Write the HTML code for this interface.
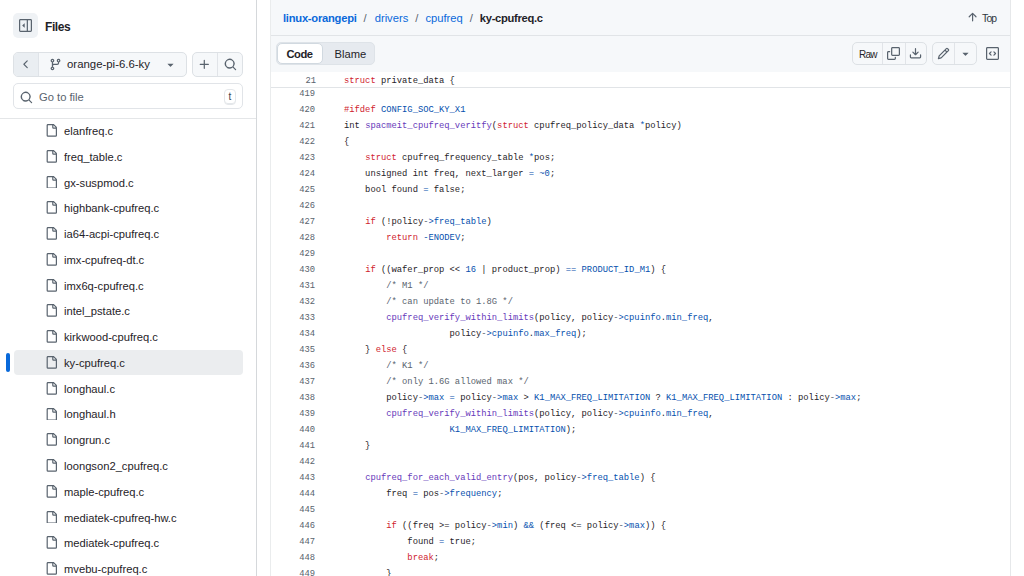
<!DOCTYPE html>
<html><head><meta charset="utf-8">
<style>
*{box-sizing:border-box;margin:0;padding:0}
html,body{width:1024px;height:576px;overflow:hidden;background:#fff;font-family:"Liberation Sans",sans-serif;color:#1f2328}
.a{position:absolute}
svg{display:block}
#side{position:absolute;left:0;top:0;width:257px;height:576px;border-right:1px solid #d5d8db;background:#fff}
.btn{position:absolute;border:1px solid #dde1e5;border-radius:5px;background:#f6f8fa}
.row{position:absolute;left:0;width:256px;height:26px}
.row .ic{position:absolute;left:45px;top:6.6px}
.row .t{position:absolute;left:64px;top:0.5px;line-height:26px;font-size:11.2px;white-space:nowrap;color:#1f2328}
.sel{position:absolute;left:14px;width:229px;border-radius:4px;background:#ebedef}
#main{position:absolute;left:257px;top:0;width:767px;height:576px;background:#fff}
#box{position:absolute;left:270px;top:-6px;width:741px;height:600px;border:1px solid #d1d9e0;border-radius:6px;background:#fff}
.hdr{position:absolute;left:271px;top:0;width:739px;height:36px;background:#f6f8fa;border-bottom:1px solid #e1e4e7}
.tb{position:absolute;left:271px;top:36px;width:739px;height:36px;background:#f6f8fa}
.code{font-family:"Liberation Mono",monospace;font-size:8.8px;white-space:pre}
.ln{position:absolute;left:271px;width:44px;text-align:right;height:16px;line-height:16px;color:#59636e}
.cl{position:absolute;left:344px;height:16px;line-height:16px;color:#1f2328}
.k{color:#cf222e}.f{color:#6639ba}.b{color:#0550ae}.c{color:#59636e}
</style></head><body>
<div id="side">
  <!-- toggle -->
  <div class="a" style="left:13px;top:13px;width:25px;height:25px;border-radius:5px;background:#eff2f5"></div>
  <svg class="a" style="left:19px;top:19px" width="13" height="13" viewBox="0 0 16 16"><path fill="#59636e" d="m4.177 7.823 2.396-2.396A.25.25 0 0 1 7 5.604v4.792a.25.25 0 0 1-.427.177L4.177 8.177a.25.25 0 0 1 0-.354Z"/><path fill="#59636e" d="M0 1.75C0 .784.784 0 1.75 0h12.5C15.216 0 16 .784 16 1.75v12.5A1.75 1.75 0 0 1 14.25 16H1.75A1.75 1.75 0 0 1 0 14.25Zm1.75-.25a.25.25 0 0 0-.25.25v12.5c0 .138.112.25.25.25H9.5v-13Zm12.5 13a.25.25 0 0 0 .25-.25V1.75a.25.25 0 0 0-.25-.25H11v13Z"/></svg>
  <div class="a" style="left:45px;top:17.8px;line-height:18px;font-size:12px;font-weight:bold;letter-spacing:-0.4px">Files</div>

  <!-- branch group -->
  <div class="btn" style="left:13px;top:52px;width:174px;height:25px"></div>
  <div class="a" style="left:14px;top:53px;width:25px;height:23px;background:#eaeef2;border-radius:4px 0 0 4px;border-right:1px solid #dfe3e8"></div>
  <svg class="a" style="left:19.8px;top:58px" width="12.5" height="12.5" viewBox="0 0 16 16"><path fill="#59636e" d="M9.78 12.78a.75.75 0 0 1-1.06 0L4.47 8.53a.75.75 0 0 1 0-1.06l4.25-4.25a.751.751 0 0 1 1.042.018.751.751 0 0 1 .018 1.042L6.06 8l3.72 3.72a.75.75 0 0 1 0 1.06Z"/></svg>
  <svg class="a" style="left:49px;top:58px" width="13" height="13" viewBox="0 0 16 16"><path fill="#59636e" d="M9.5 3.25a2.25 2.25 0 1 1 3 2.122V6A2.5 2.5 0 0 1 10 8.5H6a1 1 0 0 0-1 1v1.128a2.251 2.251 0 1 1-1.5 0V5.372a2.25 2.25 0 1 1 1.5 0v1.836A2.493 2.493 0 0 1 6 7h4a1 1 0 0 0 1-1v-.628A2.25 2.25 0 0 1 9.5 3.25Zm-6 0a.75.75 0 1 0 1.5 0 .75.75 0 0 0-1.5 0Zm8.25-.75a.75.75 0 1 0 0 1.5.75.75 0 0 0 0-1.5ZM4.25 12a.75.75 0 1 0 0 1.5.75.75 0 0 0 0-1.5Z"/></svg>
  <div class="a" style="left:67px;top:55px;line-height:18px;font-size:11.4px">orange-pi-6.6-ky</div>
  <svg class="a" style="left:164px;top:58px" width="13" height="13" viewBox="0 0 16 16"><path fill="#59636e" d="m4.427 7.427 3.396 3.396a.25.25 0 0 0 .354 0l3.396-3.396A.25.25 0 0 0 11.396 7H4.604a.25.25 0 0 0-.177.427Z"/></svg>

  <div class="btn" style="left:192px;top:52px;width:51px;height:25px"></div>
  <div class="a" style="left:217px;top:53px;width:1px;height:23px;background:#e1e4e8"></div>
  <svg class="a" style="left:198px;top:58px" width="13" height="13" viewBox="0 0 16 16"><path fill="#59636e" d="M7.75 2a.75.75 0 0 1 .75.75V7h4.25a.75.75 0 0 1 0 1.5H8.5v4.25a.75.75 0 0 1-1.5 0V8.5H2.75a.75.75 0 0 1 0-1.5H7V2.75A.75.75 0 0 1 7.75 2Z"/></svg>
  <svg class="a" style="left:224px;top:58px" width="13" height="13" viewBox="0 0 16 16"><path fill="#59636e" d="M10.68 11.74a6 6 0 0 1-7.922-8.982 6 6 0 0 1 8.982 7.922l3.04 3.04a.749.749 0 0 1-.326 1.275.749.749 0 0 1-.734-.215ZM11.5 7a4.499 4.499 0 1 0-8.997 0A4.499 4.499 0 0 0 11.5 7Z"/></svg>

  <!-- go to file -->
  <div class="a" style="left:13px;top:83px;width:230px;height:25.5px;border:1px solid #e1e4e8;border-radius:5px;background:#fff"></div>
  <svg class="a" style="left:19.5px;top:90.5px" width="13" height="13" viewBox="0 0 16 16"><path fill="#59636e" d="M10.68 11.74a6 6 0 0 1-7.922-8.982 6 6 0 0 1 8.982 7.922l3.04 3.04a.749.749 0 0 1-.326 1.275.749.749 0 0 1-.734-.215ZM11.5 7a4.499 4.499 0 1 0-8.997 0A4.499 4.499 0 0 0 11.5 7Z"/></svg>
  <div class="a" style="left:39px;top:87.5px;line-height:18px;font-size:11.2px;color:#59636e">Go to file</div>
  <div class="a" style="left:224px;top:89px;width:12px;height:15.5px;border:1px solid #e4e7ea;border-radius:4px;box-shadow:inset 0 -1px 0 #e4e7ea;font-size:10px;line-height:14px;text-align:center;color:#3d444d">t</div>

  <div class="a" style="left:0;top:118px;width:256px;height:1px;background:#e4e6e8"></div>

  <div class="row" style="top:117.50px"><svg class="ic" width="12.8" height="12.8" viewBox="0 0 16 16"><path fill="#59636e" d="M2 1.75C2 .784 2.784 0 3.75 0h6.586c.464 0 .909.184 1.237.513l2.914 2.914c.329.328.513.773.513 1.237v9.586A1.75 1.75 0 0 1 13.25 16h-9.5A1.75 1.75 0 0 1 2 14.25Zm1.75-.25a.25.25 0 0 0-.25.25v12.5c0 .138.112.25.25.25h9.5a.25.25 0 0 0 .25-.25V6h-2.75A1.75 1.75 0 0 1 9 4.25V1.5Zm6.75.062V4.25c0 .138.112.25.25.25h2.688l-.011-.013-2.914-2.914-.013-.011Z"/></svg><div class="t">elanfreq.c</div></div>
<div class="row" style="top:143.27px"><svg class="ic" width="12.8" height="12.8" viewBox="0 0 16 16"><path fill="#59636e" d="M2 1.75C2 .784 2.784 0 3.75 0h6.586c.464 0 .909.184 1.237.513l2.914 2.914c.329.328.513.773.513 1.237v9.586A1.75 1.75 0 0 1 13.25 16h-9.5A1.75 1.75 0 0 1 2 14.25Zm1.75-.25a.25.25 0 0 0-.25.25v12.5c0 .138.112.25.25.25h9.5a.25.25 0 0 0 .25-.25V6h-2.75A1.75 1.75 0 0 1 9 4.25V1.5Zm6.75.062V4.25c0 .138.112.25.25.25h2.688l-.011-.013-2.914-2.914-.013-.011Z"/></svg><div class="t">freq_table.c</div></div>
<div class="row" style="top:169.04px"><svg class="ic" width="12.8" height="12.8" viewBox="0 0 16 16"><path fill="#59636e" d="M2 1.75C2 .784 2.784 0 3.75 0h6.586c.464 0 .909.184 1.237.513l2.914 2.914c.329.328.513.773.513 1.237v9.586A1.75 1.75 0 0 1 13.25 16h-9.5A1.75 1.75 0 0 1 2 14.25Zm1.75-.25a.25.25 0 0 0-.25.25v12.5c0 .138.112.25.25.25h9.5a.25.25 0 0 0 .25-.25V6h-2.75A1.75 1.75 0 0 1 9 4.25V1.5Zm6.75.062V4.25c0 .138.112.25.25.25h2.688l-.011-.013-2.914-2.914-.013-.011Z"/></svg><div class="t">gx-suspmod.c</div></div>
<div class="row" style="top:194.81px"><svg class="ic" width="12.8" height="12.8" viewBox="0 0 16 16"><path fill="#59636e" d="M2 1.75C2 .784 2.784 0 3.75 0h6.586c.464 0 .909.184 1.237.513l2.914 2.914c.329.328.513.773.513 1.237v9.586A1.75 1.75 0 0 1 13.25 16h-9.5A1.75 1.75 0 0 1 2 14.25Zm1.75-.25a.25.25 0 0 0-.25.25v12.5c0 .138.112.25.25.25h9.5a.25.25 0 0 0 .25-.25V6h-2.75A1.75 1.75 0 0 1 9 4.25V1.5Zm6.75.062V4.25c0 .138.112.25.25.25h2.688l-.011-.013-2.914-2.914-.013-.011Z"/></svg><div class="t">highbank-cpufreq.c</div></div>
<div class="row" style="top:220.58px"><svg class="ic" width="12.8" height="12.8" viewBox="0 0 16 16"><path fill="#59636e" d="M2 1.75C2 .784 2.784 0 3.75 0h6.586c.464 0 .909.184 1.237.513l2.914 2.914c.329.328.513.773.513 1.237v9.586A1.75 1.75 0 0 1 13.25 16h-9.5A1.75 1.75 0 0 1 2 14.25Zm1.75-.25a.25.25 0 0 0-.25.25v12.5c0 .138.112.25.25.25h9.5a.25.25 0 0 0 .25-.25V6h-2.75A1.75 1.75 0 0 1 9 4.25V1.5Zm6.75.062V4.25c0 .138.112.25.25.25h2.688l-.011-.013-2.914-2.914-.013-.011Z"/></svg><div class="t">ia64-acpi-cpufreq.c</div></div>
<div class="row" style="top:246.35px"><svg class="ic" width="12.8" height="12.8" viewBox="0 0 16 16"><path fill="#59636e" d="M2 1.75C2 .784 2.784 0 3.75 0h6.586c.464 0 .909.184 1.237.513l2.914 2.914c.329.328.513.773.513 1.237v9.586A1.75 1.75 0 0 1 13.25 16h-9.5A1.75 1.75 0 0 1 2 14.25Zm1.75-.25a.25.25 0 0 0-.25.25v12.5c0 .138.112.25.25.25h9.5a.25.25 0 0 0 .25-.25V6h-2.75A1.75 1.75 0 0 1 9 4.25V1.5Zm6.75.062V4.25c0 .138.112.25.25.25h2.688l-.011-.013-2.914-2.914-.013-.011Z"/></svg><div class="t">imx-cpufreq-dt.c</div></div>
<div class="row" style="top:272.12px"><svg class="ic" width="12.8" height="12.8" viewBox="0 0 16 16"><path fill="#59636e" d="M2 1.75C2 .784 2.784 0 3.75 0h6.586c.464 0 .909.184 1.237.513l2.914 2.914c.329.328.513.773.513 1.237v9.586A1.75 1.75 0 0 1 13.25 16h-9.5A1.75 1.75 0 0 1 2 14.25Zm1.75-.25a.25.25 0 0 0-.25.25v12.5c0 .138.112.25.25.25h9.5a.25.25 0 0 0 .25-.25V6h-2.75A1.75 1.75 0 0 1 9 4.25V1.5Zm6.75.062V4.25c0 .138.112.25.25.25h2.688l-.011-.013-2.914-2.914-.013-.011Z"/></svg><div class="t">imx6q-cpufreq.c</div></div>
<div class="row" style="top:297.89px"><svg class="ic" width="12.8" height="12.8" viewBox="0 0 16 16"><path fill="#59636e" d="M2 1.75C2 .784 2.784 0 3.75 0h6.586c.464 0 .909.184 1.237.513l2.914 2.914c.329.328.513.773.513 1.237v9.586A1.75 1.75 0 0 1 13.25 16h-9.5A1.75 1.75 0 0 1 2 14.25Zm1.75-.25a.25.25 0 0 0-.25.25v12.5c0 .138.112.25.25.25h9.5a.25.25 0 0 0 .25-.25V6h-2.75A1.75 1.75 0 0 1 9 4.25V1.5Zm6.75.062V4.25c0 .138.112.25.25.25h2.688l-.011-.013-2.914-2.914-.013-.011Z"/></svg><div class="t">intel_pstate.c</div></div>
<div class="row" style="top:323.66px"><svg class="ic" width="12.8" height="12.8" viewBox="0 0 16 16"><path fill="#59636e" d="M2 1.75C2 .784 2.784 0 3.75 0h6.586c.464 0 .909.184 1.237.513l2.914 2.914c.329.328.513.773.513 1.237v9.586A1.75 1.75 0 0 1 13.25 16h-9.5A1.75 1.75 0 0 1 2 14.25Zm1.75-.25a.25.25 0 0 0-.25.25v12.5c0 .138.112.25.25.25h9.5a.25.25 0 0 0 .25-.25V6h-2.75A1.75 1.75 0 0 1 9 4.25V1.5Zm6.75.062V4.25c0 .138.112.25.25.25h2.688l-.011-.013-2.914-2.914-.013-.011Z"/></svg><div class="t">kirkwood-cpufreq.c</div></div>
<div class="sel" style="top:349.63px;height:25px"></div>
<div class="a" style="left:6px;top:352.93px;width:4px;height:19px;border-radius:2px;background:#0969da"></div>
<div class="row" style="top:349.43px"><svg class="ic" width="12.8" height="12.8" viewBox="0 0 16 16"><path fill="#59636e" d="M2 1.75C2 .784 2.784 0 3.75 0h6.586c.464 0 .909.184 1.237.513l2.914 2.914c.329.328.513.773.513 1.237v9.586A1.75 1.75 0 0 1 13.25 16h-9.5A1.75 1.75 0 0 1 2 14.25Zm1.75-.25a.25.25 0 0 0-.25.25v12.5c0 .138.112.25.25.25h9.5a.25.25 0 0 0 .25-.25V6h-2.75A1.75 1.75 0 0 1 9 4.25V1.5Zm6.75.062V4.25c0 .138.112.25.25.25h2.688l-.011-.013-2.914-2.914-.013-.011Z"/></svg><div class="t">ky-cpufreq.c</div></div>
<div class="row" style="top:375.20px"><svg class="ic" width="12.8" height="12.8" viewBox="0 0 16 16"><path fill="#59636e" d="M2 1.75C2 .784 2.784 0 3.75 0h6.586c.464 0 .909.184 1.237.513l2.914 2.914c.329.328.513.773.513 1.237v9.586A1.75 1.75 0 0 1 13.25 16h-9.5A1.75 1.75 0 0 1 2 14.25Zm1.75-.25a.25.25 0 0 0-.25.25v12.5c0 .138.112.25.25.25h9.5a.25.25 0 0 0 .25-.25V6h-2.75A1.75 1.75 0 0 1 9 4.25V1.5Zm6.75.062V4.25c0 .138.112.25.25.25h2.688l-.011-.013-2.914-2.914-.013-.011Z"/></svg><div class="t">longhaul.c</div></div>
<div class="row" style="top:400.97px"><svg class="ic" width="12.8" height="12.8" viewBox="0 0 16 16"><path fill="#59636e" d="M2 1.75C2 .784 2.784 0 3.75 0h6.586c.464 0 .909.184 1.237.513l2.914 2.914c.329.328.513.773.513 1.237v9.586A1.75 1.75 0 0 1 13.25 16h-9.5A1.75 1.75 0 0 1 2 14.25Zm1.75-.25a.25.25 0 0 0-.25.25v12.5c0 .138.112.25.25.25h9.5a.25.25 0 0 0 .25-.25V6h-2.75A1.75 1.75 0 0 1 9 4.25V1.5Zm6.75.062V4.25c0 .138.112.25.25.25h2.688l-.011-.013-2.914-2.914-.013-.011Z"/></svg><div class="t">longhaul.h</div></div>
<div class="row" style="top:426.74px"><svg class="ic" width="12.8" height="12.8" viewBox="0 0 16 16"><path fill="#59636e" d="M2 1.75C2 .784 2.784 0 3.75 0h6.586c.464 0 .909.184 1.237.513l2.914 2.914c.329.328.513.773.513 1.237v9.586A1.75 1.75 0 0 1 13.25 16h-9.5A1.75 1.75 0 0 1 2 14.25Zm1.75-.25a.25.25 0 0 0-.25.25v12.5c0 .138.112.25.25.25h9.5a.25.25 0 0 0 .25-.25V6h-2.75A1.75 1.75 0 0 1 9 4.25V1.5Zm6.75.062V4.25c0 .138.112.25.25.25h2.688l-.011-.013-2.914-2.914-.013-.011Z"/></svg><div class="t">longrun.c</div></div>
<div class="row" style="top:452.51px"><svg class="ic" width="12.8" height="12.8" viewBox="0 0 16 16"><path fill="#59636e" d="M2 1.75C2 .784 2.784 0 3.75 0h6.586c.464 0 .909.184 1.237.513l2.914 2.914c.329.328.513.773.513 1.237v9.586A1.75 1.75 0 0 1 13.25 16h-9.5A1.75 1.75 0 0 1 2 14.25Zm1.75-.25a.25.25 0 0 0-.25.25v12.5c0 .138.112.25.25.25h9.5a.25.25 0 0 0 .25-.25V6h-2.75A1.75 1.75 0 0 1 9 4.25V1.5Zm6.75.062V4.25c0 .138.112.25.25.25h2.688l-.011-.013-2.914-2.914-.013-.011Z"/></svg><div class="t">loongson2_cpufreq.c</div></div>
<div class="row" style="top:478.28px"><svg class="ic" width="12.8" height="12.8" viewBox="0 0 16 16"><path fill="#59636e" d="M2 1.75C2 .784 2.784 0 3.75 0h6.586c.464 0 .909.184 1.237.513l2.914 2.914c.329.328.513.773.513 1.237v9.586A1.75 1.75 0 0 1 13.25 16h-9.5A1.75 1.75 0 0 1 2 14.25Zm1.75-.25a.25.25 0 0 0-.25.25v12.5c0 .138.112.25.25.25h9.5a.25.25 0 0 0 .25-.25V6h-2.75A1.75 1.75 0 0 1 9 4.25V1.5Zm6.75.062V4.25c0 .138.112.25.25.25h2.688l-.011-.013-2.914-2.914-.013-.011Z"/></svg><div class="t">maple-cpufreq.c</div></div>
<div class="row" style="top:504.05px"><svg class="ic" width="12.8" height="12.8" viewBox="0 0 16 16"><path fill="#59636e" d="M2 1.75C2 .784 2.784 0 3.75 0h6.586c.464 0 .909.184 1.237.513l2.914 2.914c.329.328.513.773.513 1.237v9.586A1.75 1.75 0 0 1 13.25 16h-9.5A1.75 1.75 0 0 1 2 14.25Zm1.75-.25a.25.25 0 0 0-.25.25v12.5c0 .138.112.25.25.25h9.5a.25.25 0 0 0 .25-.25V6h-2.75A1.75 1.75 0 0 1 9 4.25V1.5Zm6.75.062V4.25c0 .138.112.25.25.25h2.688l-.011-.013-2.914-2.914-.013-.011Z"/></svg><div class="t">mediatek-cpufreq-hw.c</div></div>
<div class="row" style="top:529.82px"><svg class="ic" width="12.8" height="12.8" viewBox="0 0 16 16"><path fill="#59636e" d="M2 1.75C2 .784 2.784 0 3.75 0h6.586c.464 0 .909.184 1.237.513l2.914 2.914c.329.328.513.773.513 1.237v9.586A1.75 1.75 0 0 1 13.25 16h-9.5A1.75 1.75 0 0 1 2 14.25Zm1.75-.25a.25.25 0 0 0-.25.25v12.5c0 .138.112.25.25.25h9.5a.25.25 0 0 0 .25-.25V6h-2.75A1.75 1.75 0 0 1 9 4.25V1.5Zm6.75.062V4.25c0 .138.112.25.25.25h2.688l-.011-.013-2.914-2.914-.013-.011Z"/></svg><div class="t">mediatek-cpufreq.c</div></div>
<div class="row" style="top:555.59px"><svg class="ic" width="12.8" height="12.8" viewBox="0 0 16 16"><path fill="#59636e" d="M2 1.75C2 .784 2.784 0 3.75 0h6.586c.464 0 .909.184 1.237.513l2.914 2.914c.329.328.513.773.513 1.237v9.586A1.75 1.75 0 0 1 13.25 16h-9.5A1.75 1.75 0 0 1 2 14.25Zm1.75-.25a.25.25 0 0 0-.25.25v12.5c0 .138.112.25.25.25h9.5a.25.25 0 0 0 .25-.25V6h-2.75A1.75 1.75 0 0 1 9 4.25V1.5Zm6.75.062V4.25c0 .138.112.25.25.25h2.688l-.011-.013-2.914-2.914-.013-.011Z"/></svg><div class="t">mvebu-cpufreq.c</div></div>
</div>

<div class="hdr"></div>
<div class="tb"></div>
<div class="a" style="left:270px;top:0;width:1px;height:576px;background:#eaeced"></div>
<div class="a" style="left:1010px;top:0;width:1px;height:576px;background:#e6e8ea"></div>

<div class="code ln" style="top:86.2px">419</div><div class="code cl" style="top:86.2px"></div>
<div class="code ln" style="top:102.2px">420</div><div class="code cl" style="top:102.2px"><span class="k">#ifdef</span> <span class="b">CONFIG_SOC_KY_X1</span></div>
<div class="code ln" style="top:118.2px">421</div><div class="code cl" style="top:118.2px">int <span class="f">spacmeit_cpufreq_veritfy</span>(<span class="k">struct</span> cpufreq_policy_data <span class="b">*</span>policy)</div>
<div class="code ln" style="top:134.2px">422</div><div class="code cl" style="top:134.2px">{</div>
<div class="code ln" style="top:150.2px">423</div><div class="code cl" style="top:150.2px">    <span class="k">struct</span> cpufreq_frequency_table <span class="b">*</span>pos;</div>
<div class="code ln" style="top:166.2px">424</div><div class="code cl" style="top:166.2px">    unsigned int freq, next_larger <span class="b">=</span> <span class="b">~0</span>;</div>
<div class="code ln" style="top:182.2px">425</div><div class="code cl" style="top:182.2px">    bool found <span class="b">=</span> false;</div>
<div class="code ln" style="top:198.2px">426</div><div class="code cl" style="top:198.2px"></div>
<div class="code ln" style="top:214.2px">427</div><div class="code cl" style="top:214.2px">    <span class="k">if</span> (!policy<span class="c">-</span><span class="b">&gt;freq_table</span>)</div>
<div class="code ln" style="top:230.2px">428</div><div class="code cl" style="top:230.2px">        <span class="k">return</span> <span class="b">-ENODEV</span>;</div>
<div class="code ln" style="top:246.2px">429</div><div class="code cl" style="top:246.2px"></div>
<div class="code ln" style="top:262.2px">430</div><div class="code cl" style="top:262.2px">    <span class="k">if</span> ((wafer_prop &lt;&lt; <span class="b">16</span> | product_prop) <span class="b">==</span> <span class="b">PRODUCT_ID_M1</span>) {</div>
<div class="code ln" style="top:278.2px">431</div><div class="code cl" style="top:278.2px">        <span class="c">/* M1 */</span></div>
<div class="code ln" style="top:294.2px">432</div><div class="code cl" style="top:294.2px">        <span class="c">/* can update to 1.8G */</span></div>
<div class="code ln" style="top:310.2px">433</div><div class="code cl" style="top:310.2px">        <span class="f">cpufreq_verify_within_limits</span>(policy, policy<span class="c">-</span><span class="b">&gt;cpuinfo</span>.<span class="b">min_freq</span>,</div>
<div class="code ln" style="top:326.2px">434</div><div class="code cl" style="top:326.2px">                    policy<span class="c">-</span><span class="b">&gt;cpuinfo</span>.<span class="b">max_freq</span>);</div>
<div class="code ln" style="top:342.2px">435</div><div class="code cl" style="top:342.2px">    } <span class="k">else</span> {</div>
<div class="code ln" style="top:358.2px">436</div><div class="code cl" style="top:358.2px">        <span class="c">/* K1 */</span></div>
<div class="code ln" style="top:374.2px">437</div><div class="code cl" style="top:374.2px">        <span class="c">/* only 1.6G allowed max */</span></div>
<div class="code ln" style="top:390.2px">438</div><div class="code cl" style="top:390.2px">        policy<span class="c">-</span><span class="b">&gt;max</span> <span class="b">=</span> policy<span class="c">-</span><span class="b">&gt;max</span> &gt; <span class="b">K1_MAX_FREQ_LIMITATION</span> ? <span class="b">K1_MAX_FREQ_LIMITATION</span> : policy<span class="c">-</span><span class="b">&gt;max</span>;</div>
<div class="code ln" style="top:406.2px">439</div><div class="code cl" style="top:406.2px">        <span class="f">cpufreq_verify_within_limits</span>(policy, policy<span class="c">-</span><span class="b">&gt;cpuinfo</span>.<span class="b">min_freq</span>,</div>
<div class="code ln" style="top:422.2px">440</div><div class="code cl" style="top:422.2px">                    <span class="b">K1_MAX_FREQ_LIMITATION</span>);</div>
<div class="code ln" style="top:438.2px">441</div><div class="code cl" style="top:438.2px">    }</div>
<div class="code ln" style="top:454.2px">442</div><div class="code cl" style="top:454.2px"></div>
<div class="code ln" style="top:470.2px">443</div><div class="code cl" style="top:470.2px">    <span class="f">cpufreq_for_each_valid_entry</span>(pos, policy<span class="c">-</span><span class="b">&gt;freq_table</span>) {</div>
<div class="code ln" style="top:486.2px">444</div><div class="code cl" style="top:486.2px">        freq <span class="b">=</span> pos<span class="c">-</span><span class="b">&gt;frequency</span>;</div>
<div class="code ln" style="top:502.2px">445</div><div class="code cl" style="top:502.2px"></div>
<div class="code ln" style="top:518.2px">446</div><div class="code cl" style="top:518.2px">        <span class="k">if</span> ((freq &gt;= policy<span class="c">-</span><span class="b">&gt;min</span>) <span class="b">&amp;&amp;</span> (freq &lt;= policy<span class="c">-</span><span class="b">&gt;max</span>)) {</div>
<div class="code ln" style="top:534.2px">447</div><div class="code cl" style="top:534.2px">            found <span class="b">=</span> true;</div>
<div class="code ln" style="top:550.2px">448</div><div class="code cl" style="top:550.2px">            <span class="k">break</span>;</div>
<div class="code ln" style="top:566.2px">449</div><div class="code cl" style="top:566.2px">        }</div>

<!-- breadcrumb -->
<div class="a" style="left:283px;top:9px;line-height:18px;font-size:11.2px;white-space:nowrap"><span style="color:#0969da;font-weight:bold;letter-spacing:-0.25px">linux-orangepi</span><span style="color:#59636e;padding:0 8px 0 7px">/</span><span style="color:#0969da">drivers</span><span style="color:#59636e;padding:0 7px">/</span><span style="color:#0969da">cpufreq</span><span style="color:#59636e;padding:0 7px">/</span><span style="font-weight:bold;letter-spacing:-0.3px">ky-cpufreq.c</span></div>
<!-- top -->
<svg class="a" style="left:966px;top:11.2px" width="12.8" height="12.8" viewBox="0 0 16 16"><path fill="#59636e" d="M3.47 7.78a.75.75 0 0 1 0-1.06l4.25-4.25a.75.75 0 0 1 1.06 0l4.25 4.25a.751.751 0 0 1-.018 1.042.751.751 0 0 1-1.042.018L9 4.81v7.44a.75.75 0 0 1-1.5 0V4.81L4.53 7.78a.75.75 0 0 1-1.06 0Z"/></svg>
<div class="a" style="left:982px;top:10px;line-height:18px;font-size:10.4px;letter-spacing:-0.8px;color:#31373d">Top</div>

<!-- code/blame -->
<div class="a" style="left:276px;top:42px;width:99px;height:23px;border-radius:5px;background:#e6eaef;border:1px solid #dee3e8"></div>
<div class="a" style="left:277px;top:43px;width:46px;height:21px;border-radius:5px;background:#fff;border:1px solid #d1d9e0"></div>
<div class="a" style="left:286.5px;top:45px;line-height:19px;font-size:11.2px;font-weight:bold;letter-spacing:-0.5px">Code</div>
<div class="a" style="left:334.5px;top:45px;line-height:19px;font-size:11.2px;color:#1f2328">Blame</div>

<!-- right toolbar -->
<div class="btn" style="left:852px;top:42px;width:75px;height:23px"></div>
<div class="a" style="left:882px;top:43px;width:1px;height:21px;background:#e1e4e8"></div>
<div class="a" style="left:905px;top:43px;width:1px;height:21px;background:#e1e4e8"></div>
<div class="a" style="left:859px;top:44.5px;line-height:19px;font-size:10px;letter-spacing:-0.8px;color:#1f2328">Raw</div>
<svg class="a" style="left:887px;top:47px" width="13" height="13" viewBox="0 0 16 16"><path fill="#59636e" d="M0 6.75C0 5.784.784 5 1.75 5h1.5a.75.75 0 0 1 0 1.5h-1.5a.25.25 0 0 0-.25.25v7.5c0 .138.112.25.25.25h7.5a.25.25 0 0 0 .25-.25v-1.5a.75.75 0 0 1 1.5 0v1.5A1.75 1.75 0 0 1 9.25 16h-7.5A1.75 1.75 0 0 1 0 14.25Z"/><path fill="#59636e" d="M5 1.75C5 .784 5.784 0 6.75 0h7.5C15.216 0 16 .784 16 1.75v7.5A1.75 1.75 0 0 1 14.25 11h-7.5A1.75 1.75 0 0 1 5 9.25Zm1.75-.25a.25.25 0 0 0-.25.25v7.5c0 .138.112.25.25.25h7.5a.25.25 0 0 0 .25-.25v-7.5a.25.25 0 0 0-.25-.25Z"/></svg>
<svg class="a" style="left:909px;top:47px" width="13" height="13" viewBox="0 0 16 16"><path fill="#59636e" d="M2.75 14A1.75 1.75 0 0 1 1 12.25v-2.5a.75.75 0 0 1 1.5 0v2.5c0 .138.112.25.25.25h10.5a.25.25 0 0 0 .25-.25v-2.5a.75.75 0 0 1 1.5 0v2.5A1.75 1.75 0 0 1 13.25 14Z"/><path fill="#59636e" d="M7.25 7.689V2a.75.75 0 0 1 1.5 0v5.689l1.97-1.969a.749.749 0 1 1 1.06 1.06l-3.25 3.25a.749.749 0 0 1-1.06 0L4.22 6.78a.749.749 0 1 1 1.06-1.06l1.97 1.969Z"/></svg>

<div class="btn" style="left:932px;top:42px;width:45px;height:23px"></div>
<div class="a" style="left:954px;top:43px;width:1px;height:21px;background:#e1e4e8"></div>
<svg class="a" style="left:937px;top:47px" width="13" height="13" viewBox="0 0 16 16"><path fill="#59636e" d="M11.013 1.427a1.75 1.75 0 0 1 2.474 0l1.086 1.086a1.75 1.75 0 0 1 0 2.474l-8.61 8.61c-.21.21-.47.364-.756.445l-3.251.93a.75.75 0 0 1-.927-.928l.929-3.25c.081-.286.235-.547.445-.758l8.61-8.61Zm.176 4.823L9.75 4.81l-6.286 6.287a.253.253 0 0 0-.064.108l-.558 1.953 1.953-.558a.253.253 0 0 0 .108-.064Zm1.238-3.763a.25.25 0 0 0-.354 0L10.811 3.75l1.439 1.44 1.263-1.263a.25.25 0 0 0 0-.354Z"/></svg>
<svg class="a" style="left:959px;top:47px" width="13" height="13" viewBox="0 0 16 16"><path fill="#59636e" d="m4.427 7.427 3.396 3.396a.25.25 0 0 0 .354 0l3.396-3.396A.25.25 0 0 0 11.396 7H4.604a.25.25 0 0 0-.177.427Z"/></svg>
<svg class="a" style="left:986px;top:47px" width="13" height="13" viewBox="0 0 16 16"><path fill="#59636e" d="M0 1.75C0 .784.784 0 1.75 0h12.5C15.216 0 16 .784 16 1.75v12.5A1.75 1.75 0 0 1 14.25 16H1.75A1.75 1.75 0 0 1 0 14.25Zm1.75-.25a.25.25 0 0 0-.25.25v12.5c0 .138.112.25.25.25h12.5a.25.25 0 0 0 .25-.25V1.75a.25.25 0 0 0-.25-.25Zm7.47 3.97a.75.75 0 0 1 1.06 0l2 2a.75.75 0 0 1 0 1.06l-2 2a.749.749 0 0 1-1.275-.326.749.749 0 0 1 .215-.734L10.69 8 9.22 6.53a.75.75 0 0 1 0-1.06ZM6.78 6.53 5.31 8l1.47 1.47a.749.749 0 0 1-.326 1.275.749.749 0 0 1-.734-.215l-2-2a.75.75 0 0 1 0-1.06l2-2a.751.751 0 0 1 1.042.018.751.751 0 0 1 .018 1.042Z"/></svg>

<!-- sticky line -->
<div class="a" style="left:271px;top:72px;width:739px;height:16px;background:#fff;border-bottom:1px solid #e1e4e7"></div>
<div class="code ln" style="top:73px;z-index:2;width:45px">21</div>
<div class="code cl" style="top:73px;z-index:2"><span class="k">struct</span> private_data {</div>
</body></html>
